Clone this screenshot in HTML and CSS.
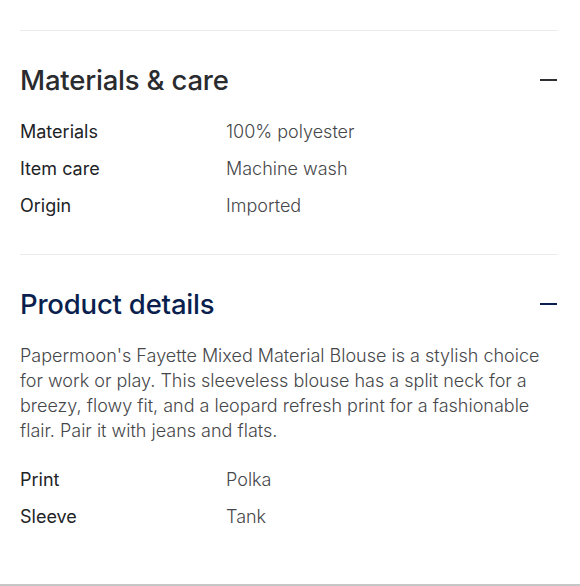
FILE: index.html
```html
<!DOCTYPE html>
<html>
<head>
<meta charset="utf-8">
<link rel="stylesheet" href="styles.css">
</head>
<body>
<div class="page">
  <section class="panel">
    <div class="panel-head">
      <h2 class="panel-title">Materials &amp; care</h2>
      <span class="collapse" aria-label="Collapse"></span>
    </div>
    <div class="specs">
      <div class="spec"><span class="spec-label">Materials</span><span class="spec-value">100% polyester</span></div>
      <div class="spec"><span class="spec-label">Item care</span><span class="spec-value">Machine wash</span></div>
      <div class="spec"><span class="spec-label">Origin</span><span class="spec-value">Imported</span></div>
    </div>
  </section>
  <section class="panel panel-last">
    <div class="panel-head">
      <h2 class="panel-title title-blue">Product details</h2>
      <span class="collapse collapse-blue" aria-label="Collapse"></span>
    </div>
    <p class="desc">Papermoon's Fayette Mixed Material Blouse is a stylish choice for work or play. This sleeveless blouse has a split neck for a breezy, flowy fit, and a leopard refresh print for a fashionable flair. Pair it with jeans and flats.</p>
    <div class="specs specs-2">
      <div class="spec"><span class="spec-label">Print</span><span class="spec-value">Polka</span></div>
      <div class="spec"><span class="spec-label">Sleeve</span><span class="spec-value">Tank</span></div>
    </div>
  </section>
</div>
<div class="bottom-rule"></div>
</body>
</html>
```

FILE: styles.css
```css
html, body {
  margin: 0;
  padding: 0;
  background: #ffffff;
}
body {
  font-family: Inter, "Noto Sans", "Liberation Sans", sans-serif;
  color: #2e2f32;
  width: 580px;
  height: 586px;
  overflow: hidden;
  position: relative;
}
.page {
  padding: 30px 22px 0 20px;
}
.panel {
  border-top: 1px solid #ececec;
  padding: 33px 0 30px;
}
.panel-last {
  padding-bottom: 0;
}
.panel-head {
  display: flex;
  align-items: center;
  justify-content: space-between;
  height: 32px;
}
.panel-title {
  margin: 0;
  font-size: 27.5px;
  line-height: 32px;
  font-weight: 500;
  letter-spacing: -0.2px;
  color: #2a2b2e;
}
.title-blue {
  color: #0b1f4e;
}
.collapse {
  display: block;
  width: 17px;
  height: 2px;
  background: #2e2f32;
  margin-right: 1px;
}
.collapse-blue {
  background: #0b1f4e;
}
.specs {
  margin-top: 17px;
  display: flex;
  flex-direction: column;
}
.specs-2 {
  margin-top: 18px;
}
.spec {
  display: grid;
  grid-template-columns: 206px 1fr;
  font-size: 18px;
  line-height: 37px;
}
.spec-label {
  font-weight: 400;
  color: #222326;
}
.spec-value {
  font-weight: 300;
  color: #46474a;
}
.desc {
  margin: 23px 0 0;
  font-size: 18px;
  line-height: 25px;
  font-weight: 300;
  color: #46474a;
}
.bottom-rule {
  position: absolute;
  left: 0;
  right: 0;
  top: 584px;
  height: 2px;
  background: #c6c6c6;
}
```
